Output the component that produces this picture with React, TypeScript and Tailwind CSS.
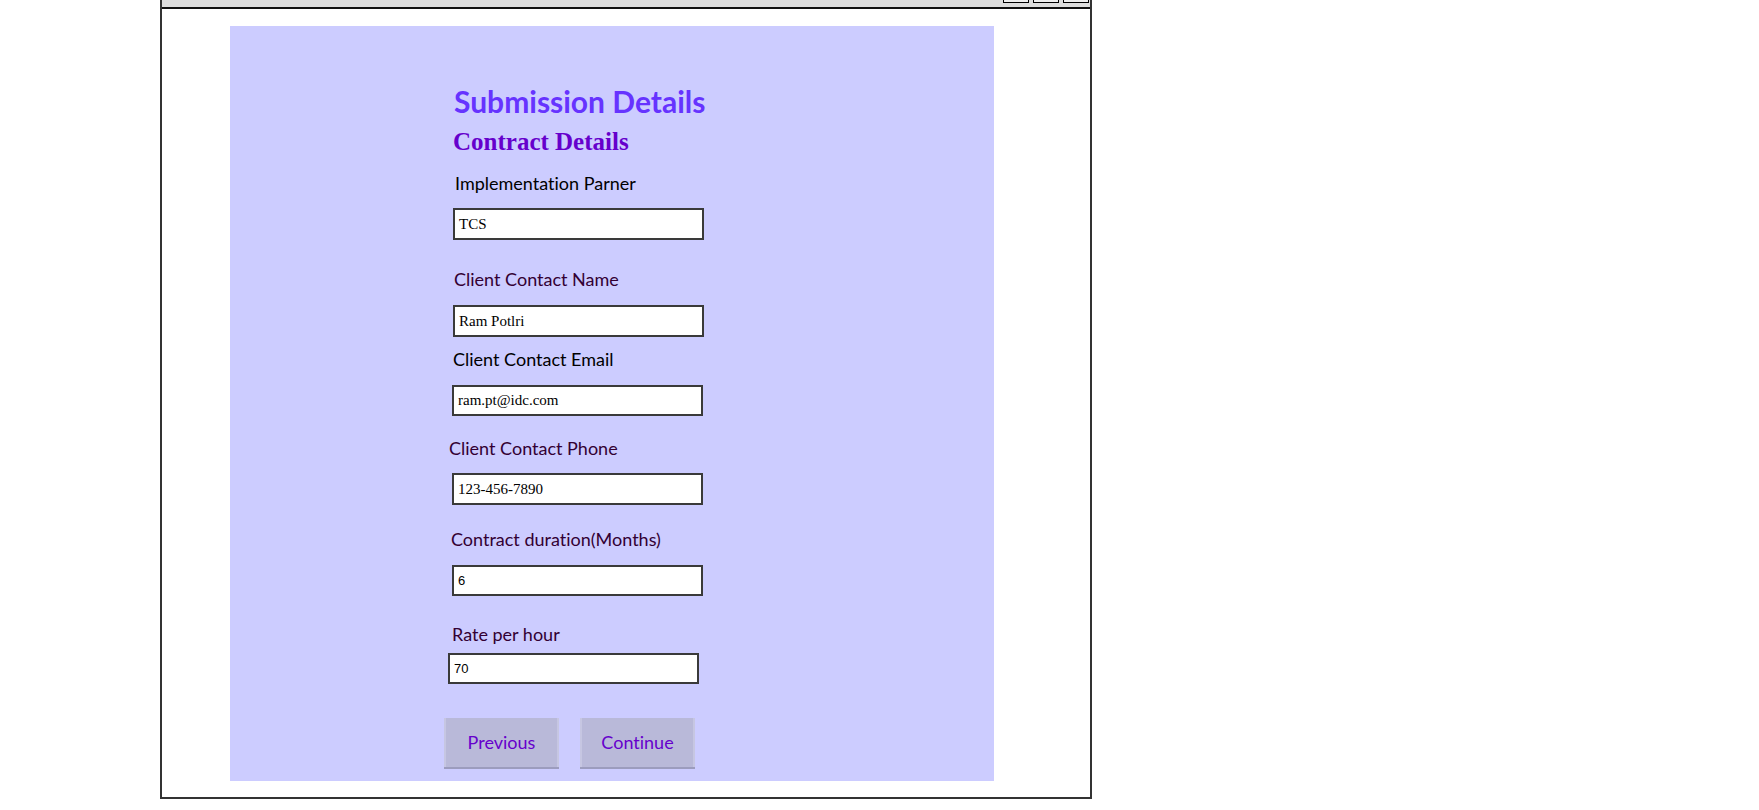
import React from "react";

const fields = [
  { label: "Implementation Parner", value: "TCS", labelClass: "text-black mt-[15px] ml-[2px]", inputClass: "mt-[14px] h-[32px]", serif: true },
  { label: "Client Contact Name", value: "Ram Potlri", labelClass: "text-[#330033] mt-[28px] ml-[1px]", inputClass: "mt-[15px] h-[32px]", serif: true },
  { label: "Client Contact Email", value: "ram.pt@idc.com", labelClass: "text-black mt-[11px]", inputClass: "mt-[15px] h-[31px] -ml-[1px]", serif: true },
  { label: "Client Contact Phone", value: "123-456-7890", labelClass: "text-[#330033] mt-[21px] -ml-[4px]", inputClass: "mt-[14px] h-[32px] -ml-[1px]", serif: true },
  { label: "Contract duration(Months)", value: "6", labelClass: "text-[#330033] mt-[23px] -ml-[2px]", inputClass: "mt-[15px] h-[31px] -ml-[1px]", serif: false },
  { label: "Rate per hour", value: "70", labelClass: "text-[#330033] mt-[27px] -ml-[1px]", inputClass: "mt-[8px] h-[31px] -ml-[5px]", serif: false },
];

export default function App() {
  return (
    <div className="min-h-screen bg-white font-['Lato',sans-serif] [font-variant-ligatures:none]">
      {/* Window frame */}
      <div className="ml-[160px] w-[932px] h-[799px] flex flex-col border-x-2 border-b-2 border-[#333]">
        <div className="h-[9px] bg-[#dddddd] border-b-2 border-[#111] flex justify-end items-start gap-[4px] pr-[1px]">
          <div className="w-[26px] h-[3px] bg-[#eeeeee] border-x border-b border-black" />
          <div className="w-[26px] h-[3px] bg-[#eeeeee] border-x border-b border-black" />
          <div className="w-[26px] h-[3px] bg-[#eeeeee] border-x border-b border-black" />
        </div>

        {/* Form panel */}
        <div className="ml-[68px] mt-[17px] w-[764px] h-[755px] bg-[#ccccff] pl-[223px] pt-[57px] flex flex-col items-start">
          <h1 className="ml-[1px] text-[30px] leading-[36px] text-[#6633ff] font-bold">Submission Details</h1>
          <h2 className="mt-[8px] text-[25px] leading-[30px] font-bold text-[#6600cc] font-['Liberation_Serif',serif]">
            Contract Details
          </h2>

          {fields.map((f) => (
            <React.Fragment key={f.label}>
              <label className={`text-[18px] leading-[22px] ${f.labelClass}`}>{f.label}</label>
              <div
                className={`w-[251px] bg-white border-2 border-[#3a3a3a] flex items-center px-[4px] text-black ${f.inputClass} ${
                  f.serif ? "text-[15px] font-['Liberation_Serif',serif]" : "text-[13px] font-['Liberation_Sans',sans-serif]"
                }`}
              >
                {f.value}
              </div>
            </React.Fragment>
          ))}

          <div className="mt-[34px] -ml-[9px] flex gap-[21px]">
            <button className="w-[115px] h-[49px] bg-[#b9b9d9] border-x-2 border-[#c6c6e2] shadow-[0_2px_0_#9c9cbe] text-[18px] text-[#6600cc]">
              Previous
            </button>
            <button className="w-[115px] h-[49px] bg-[#b9b9d9] border-x-2 border-[#c6c6e2] shadow-[0_2px_0_#9c9cbe] text-[18px] text-[#6600cc]">
              Continue
            </button>
          </div>
        </div>
      </div>
    </div>
  );
}
